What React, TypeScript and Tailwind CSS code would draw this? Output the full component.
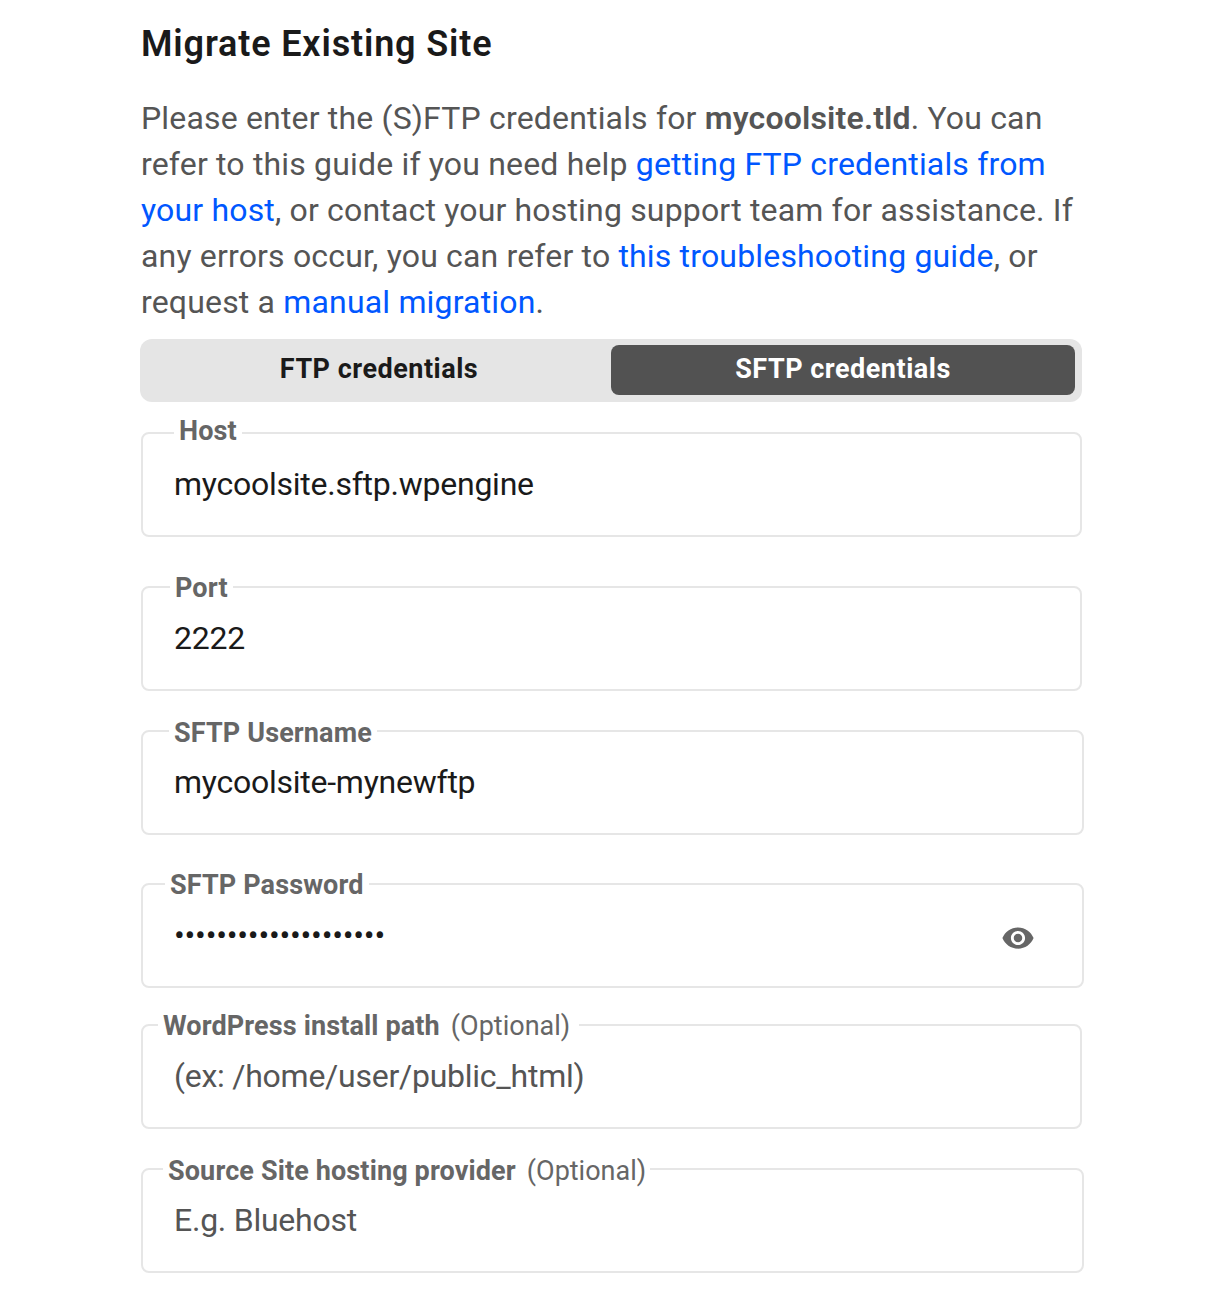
const fieldBox = "block min-w-0 border-2 border-[#e6e6e6] rounded-lg h-[118px]";
const legendText = "relative pl-[5px] text-[27px] leading-[28px] font-bold text-[#666666] tracking-[0.13px]";
const valueInput = "block w-full h-[40px] pl-[31px] pr-4 bg-transparent outline-none text-[32px] tracking-[-0.25px] text-[#1a1a1a] placeholder:text-[#555555]";

function Field({
  label,
  optional,
  value,
  placeholder,
  legendClass,
  wide,
  className,
}: {
  label: string;
  optional?: boolean;
  value?: string;
  placeholder?: string;
  legendClass: string;
  wide?: boolean;
  className: string;
}) {
  return (
    <fieldset className={`${fieldBox} ${wide ? "w-[943px]" : "w-[941px]"} ${className}`}>
      <legend className={`${legendText} ${legendClass}`}>
        {label}
        {optional && <span className="font-normal tracking-normal ml-[11px]">(Optional)</span>}
      </legend>
      <input readOnly value={value} placeholder={placeholder} className={`${valueInput} mt-[17px]`} />
    </fieldset>
  );
}

export default function App() {
  return (
    <div className="w-[1220px] h-[1302px] bg-white pl-[141px] font-['Roboto',sans-serif] overflow-hidden">
      <h1 className="pt-[21px] text-[36px] leading-[46px] font-semibold text-[#1a1a1a] tracking-[0.85px]">Migrate Existing Site</h1>
      <p className="mt-[28px] w-[941px] text-[32px] leading-[46px] text-[#555555] tracking-[0.17px]">
        Please enter the (S)FTP credentials for <strong className="font-semibold">mycoolsite.tld</strong>. You can refer to this guide if you need help{" "}
        <a className="text-[#0057ff]">getting FTP credentials from your host</a>, or contact your hosting support team for assistance. If any errors occur, you can refer to{" "}
        <a className="text-[#0057ff]">this troubleshooting guide</a>, or request a <a className="text-[#0057ff]">manual migration</a>.
      </p>

      {/* tabs */}
      <div className="mt-[14px] -ml-px w-[942px] h-[63px] bg-[#e5e5e5] rounded-xl flex pt-[6px] pl-[7px] pr-[7px]">
        <button className="w-[464px] h-[50px] pb-[2px] text-[27px] font-bold tracking-[0.5px] text-[#1a1a1a] rounded-lg">FTP credentials</button>
        <button className="w-[464px] h-[50px] pb-[2px] text-[27px] font-bold tracking-[0.5px] text-white bg-[#525252] rounded-lg">SFTP credentials</button>
      </div>

      <Field label="Host" value="mycoolsite.sftp.wpengine" legendClass="ml-[31px] pr-[5px] -top-[2px]" className="mt-[17px]" />
      <Field label="Port" value="2222" legendClass="ml-[27px] pr-[5px] top-px" className="mt-[36px]" />
      <Field label="SFTP Username" value="mycoolsite-mynewftp" legendClass="ml-[26px] pr-[5px] top-[2px]" wide className="mt-[26px]" />

      <fieldset className={`${fieldBox} w-[943px] mt-[35px]`}>
        <legend className={`${legendText} ml-[22px] pr-[5px] top-px`}>SFTP Password</legend>
        <div className="flex items-center mt-[17px]">
          <input readOnly type="password" value="mycoolsitepassword12" className="block flex-1 h-[40px] pl-[31px] bg-transparent outline-none text-[32px] tracking-[-0.25px] text-[#1a1a1a]" />
          <svg viewBox="0 0 24 24" className="w-[34px] h-[34px] mr-[47px] mt-[5px] fill-[#666666]">
            <path d="M12 4.5C7 4.5 2.73 7.61 1 12c1.73 4.39 6 7.5 11 7.5s9.27-3.11 11-7.5c-1.73-4.39-6-7.5-11-7.5zM12 17c-2.76 0-5-2.24-5-5s2.24-5 5-5 5 2.24 5 5-2.24 5-5 5zm0-8c-1.66 0-3 1.34-3 3s1.34 3 3 3 3-1.34 3-3-1.34-3-3-3z" />
          </svg>
        </div>
      </fieldset>

      <Field label="WordPress install path" optional placeholder="(ex: /home/user/public_html)" legendClass="ml-[15px] pr-[9px] top-px" className="mt-[23px]" />
      <Field label="Source Site hosting provider" optional placeholder="E.g. Bluehost" legendClass="ml-[20px] pr-[4px] top-[2px]" wide className="mt-[26px]" />
    </div>
  );
}
